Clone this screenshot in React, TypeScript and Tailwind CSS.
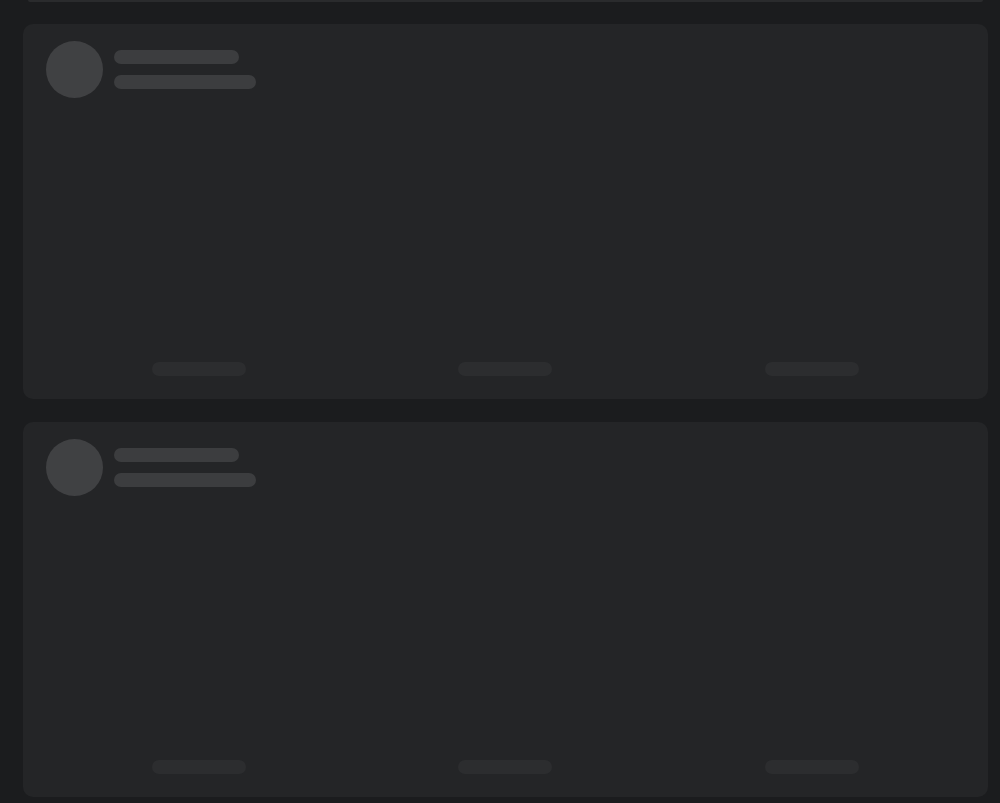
export default function App() {
  const Card = () => (
    <div className="h-[375px] rounded-[10px] bg-[#242527] flex flex-col px-[23px] pt-[17px] pb-[23px]">
      <div className="flex gap-[11px]">
        <div className="w-[57px] h-[57px] -ml-[0.5px] rounded-full bg-[#404143]" />
        <div className="flex flex-col gap-[11px] pt-[9px]">
          <div className="w-[125px] h-[14px] rounded-full bg-[#3c3d3f]" />
          <div className="w-[142px] h-[14px] rounded-full bg-[#3c3d3f]" />
        </div>
      </div>
      <div className="mt-auto grid grid-cols-3">
        <div className="flex justify-center">
          <div className="w-[94px] h-[14px] rounded-full bg-[#2c2d2f]" />
        </div>
        <div className="flex justify-center">
          <div className="w-[94px] h-[14px] rounded-full bg-[#2c2d2f]" />
        </div>
        <div className="flex justify-center">
          <div className="w-[94px] h-[14px] rounded-full bg-[#2c2d2f]" />
        </div>
      </div>
    </div>
  );
  return (
    <div className="w-[1000px] h-[803px] overflow-hidden bg-[#1b1c1e] pl-[23px] pr-[12px]">
      <div className="h-[2px] mx-[5px] rounded-b-[6px] bg-[#2a2b2d]" />
      <div className="flex flex-col gap-[23px] pt-[22px]">
        <Card />
        <Card />
      </div>
    </div>
  );
}
